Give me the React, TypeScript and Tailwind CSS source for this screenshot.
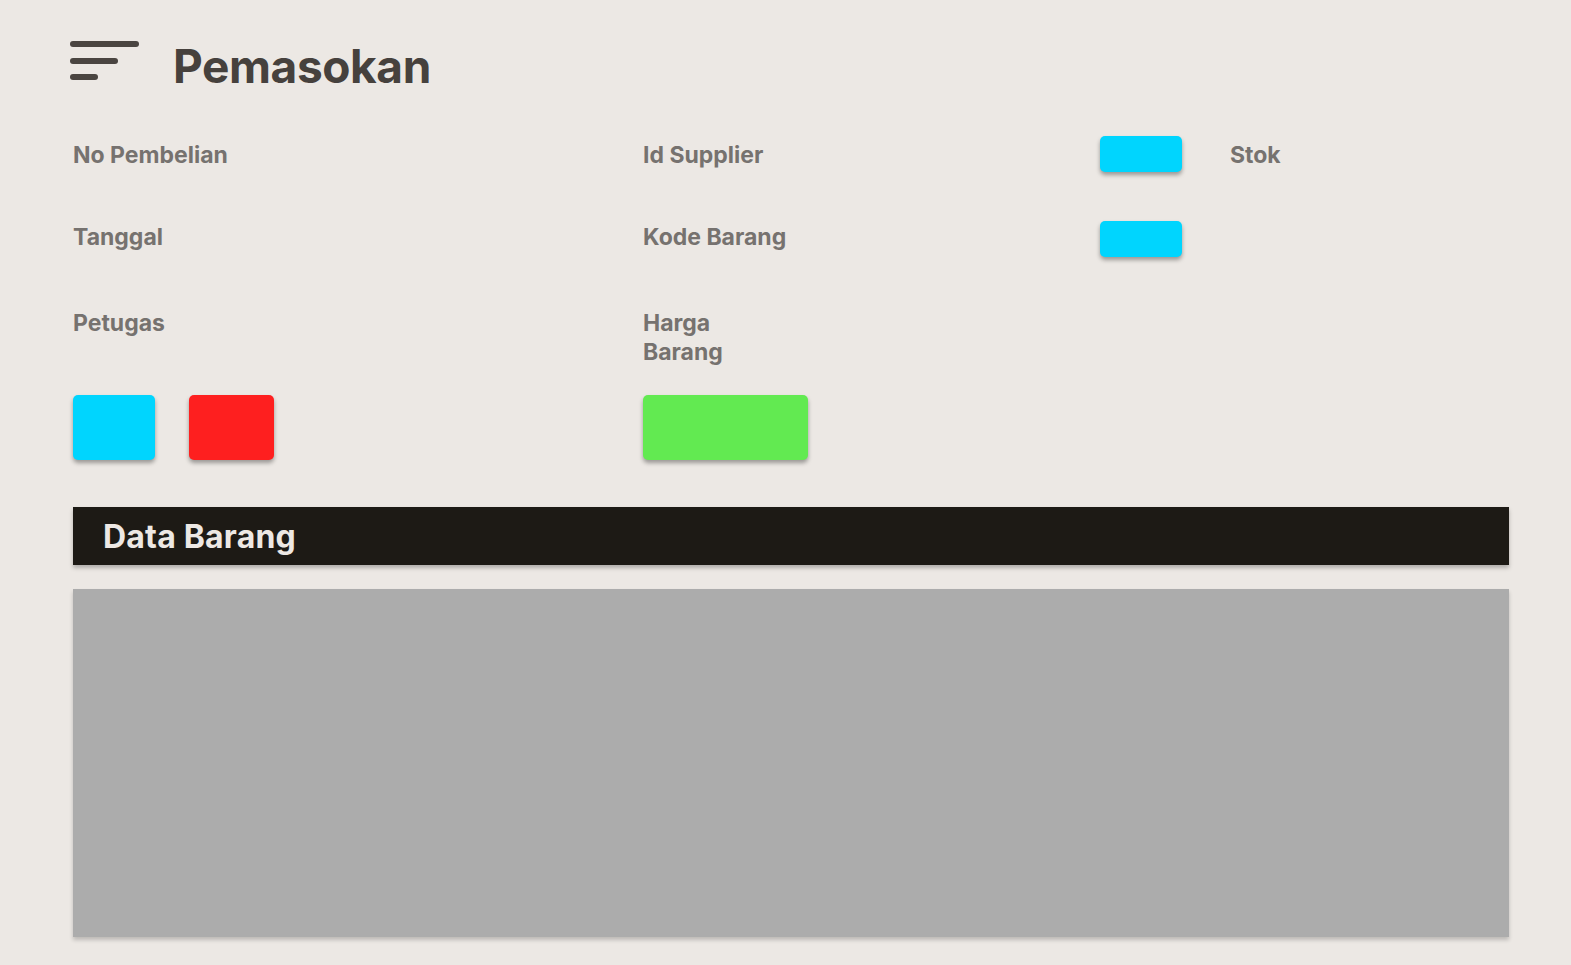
import React from "react"

function Label({ children }: { children: React.ReactNode }) {
    return <p className="text-[23px] font-bold leading-[29px] pt-[1px] text-[#76726f]">{children}</p>
}

function Swatch({ color, size }: { color: string, size: string }) {
    return <div className={`${color} ${size} rounded-[5px] shadow-[0_3px_4px_rgba(0,0,0,0.35)]`} />
}

export default function App() {
    return (
        <div className="min-h-[965px] bg-[#ece8e4] font-['Inter',sans-serif] pb-7">
            <header className="flex items-start pl-[70px] pt-[40px] h-[100px]">
                <svg width="70" height="42" viewBox="0 0 70 42">
                    <g stroke="#4a4541" strokeWidth="6" strokeLinecap="round">
                        <line x1="3" y1="4" x2="66" y2="4" />
                        <line x1="3" y1="21" x2="45" y2="21" />
                        <line x1="3" y1="37" x2="25" y2="37" />
                    </g>
                </svg>
                <h1 className="ml-[33px] -mt-[2px] text-[46px] font-bold leading-[56px] tracking-[-0.4px] text-[#46413d]">Pemasokan</h1>
            </header>

            <div className="px-[73px] pt-[40px] grid grid-cols-[570px_457px_130px_1fr] grid-rows-[82px_86px_87px_65px]">
                <Label>No Pembelian</Label>
                <Label>Id Supplier</Label>
                <div className="-mt-[4px]"><Swatch color="bg-[#00d5fe]" size="w-[82px] h-[36px]" /></div>
                <Label>Stok</Label>

                <Label>Tanggal</Label>
                <Label>Kode Barang</Label>
                <div className="-mt-[1px]"><Swatch color="bg-[#00d5fe]" size="w-[82px] h-[36px]" /></div>
                <div />

                <Label>Petugas</Label>
                <div className="w-[90px]"><Label>Harga Barang</Label></div>
                <div />
                <div />

                <div className="flex gap-[34px]">
                    <Swatch color="bg-[#00d5fe]" size="w-[82px] h-[65px]" />
                    <Swatch color="bg-[#fe1f1f]" size="w-[85px] h-[65px]" />
                </div>
                <div>
                    <Swatch color="bg-[#62ea51]" size="w-[165px] h-[65px]" />
                </div>
            </div>

            <section className="ml-[73px] mr-[62px] mt-[47px] flex flex-col gap-[24px]">
                <div className="h-[58px] bg-[#1d1a15] pl-[30px] flex items-center shadow-[0_3px_4px_rgba(0,0,0,0.25)]">
                    <h2 className="text-[32px] font-bold tracking-[0.2px] pt-[2px] text-[#ede8e4]">Data Barang</h2>
                </div>
                <div className="h-[348px] bg-[#acacac] shadow-[0_3px_4px_rgba(0,0,0,0.2)]" />
            </section>
        </div>
    )
}
